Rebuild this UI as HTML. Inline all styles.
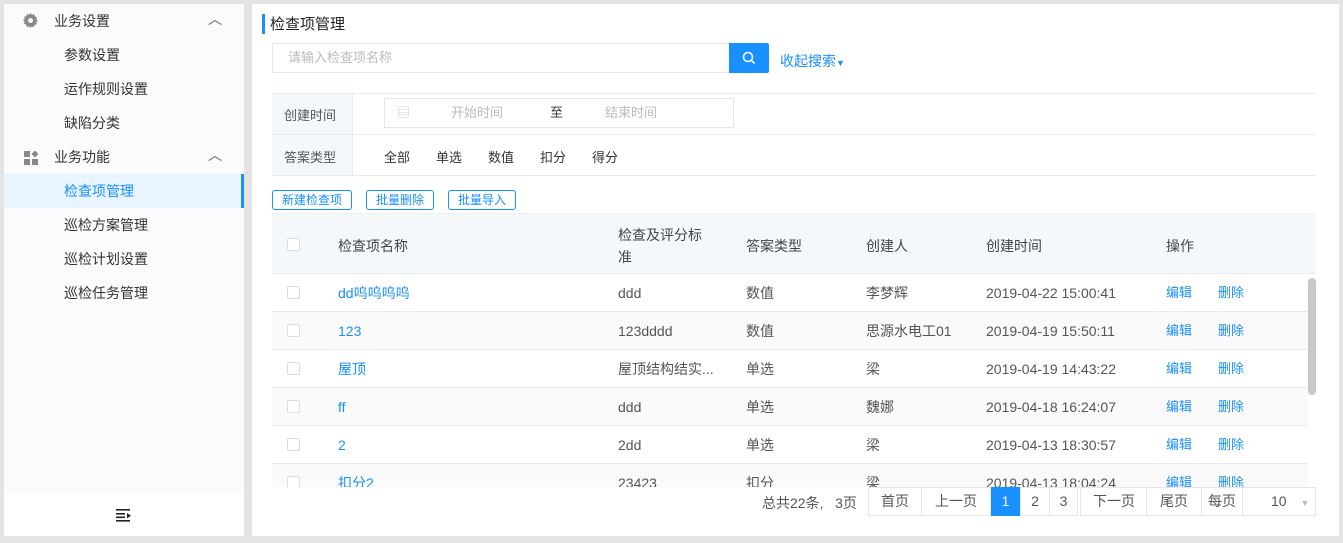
<!DOCTYPE html>
<html><head><meta charset="utf-8"><style>
*{box-sizing:border-box;margin:0;padding:0}
body{width:1343px;height:543px;background:#e4e4e4;font-family:"Liberation Sans","Noto Sans CJK SC",sans-serif;font-size:14px;color:#333;position:relative;overflow:hidden}
.abs{position:absolute}
.side{left:4px;top:4px;width:240px;height:532px;background:#fafbfd}
.side .foot{position:absolute;left:0;bottom:0;width:240px;height:42px;background:#fff}
.mi{position:absolute;left:0;width:240px;height:34px;line-height:34px}
.main{left:252px;top:4px;width:1087px;height:532px;background:#fff}
.cb{position:absolute;left:15px;width:13px;height:13px;border:1px solid #ddd;background:#fff;border-radius:2px}
.row{position:absolute;left:0;width:1036px;height:38px;border-bottom:1px solid #e8ecf0;line-height:38px}
.row span{position:absolute;white-space:nowrap}
.blue{color:#1890ff}
.btn{position:absolute;top:186px;height:20px;border:1px solid #1890ff;border-radius:3px;color:#1890ff;font-size:12px;line-height:18px;text-align:center}
.pg{position:absolute;top:483px;height:29px;border:1px solid #e6e6e6;line-height:27px;text-align:center;font-size:14px;color:#555;background:#fff}
</style></head><body>
<div class="abs side">
  <div class="mi" style="top:0;font-size:14px"><svg class="abs" style="left:19px;top:9px" width="15" height="15" viewBox="0 0 16 16"><path fill="#888" d="M8 0l1.6 1.8 2.4-.6.6 2.4 2.4.8-.8 2.4L16 8l-1.8 1.6.6 2.4-2.4.6-.8 2.4-2.4-.8L8 16l-1.6-1.8-2.4.6-.6-2.4-2.4-.8.8-2.4L0 8l1.8-1.6-.6-2.4 2.4-.6.8-2.4 2.4.8z"/><circle cx="8" cy="8" r="2.6" fill="#fafbfd"/></svg><span class="abs" style="left:50px">业务设置</span><span class="abs" style="left:204px;top:-2px;color:#666">︿</span></div>
  <div class="mi" style="top:34px"><span class="abs" style="left:60px">参数设置</span></div>
  <div class="mi" style="top:68px"><span class="abs" style="left:60px">运作规则设置</span></div>
  <div class="mi" style="top:102px"><span class="abs" style="left:60px">缺陷分类</span></div>
  <div class="mi" style="top:136px"><svg class="abs" style="left:20px;top:11px" width="14" height="14" viewBox="0 0 14 14"><rect x="0" y="0" width="6" height="6" fill="#888"/><rect x="0" y="8" width="6" height="6" fill="#888"/><rect x="8" y="8" width="6" height="6" fill="#888"/><rect x="8.5" y=".5" width="5" height="5" fill="#888" transform="rotate(45 11 3)"/></svg><span class="abs" style="left:50px">业务功能</span><span class="abs" style="left:204px;top:-2px;color:#666">︿</span></div>
  <div class="mi" style="top:170px;background:#e8f4ff;border-right:3px solid #1890ff"><span class="abs blue" style="left:60px">检查项管理</span></div>
  <div class="mi" style="top:204px"><span class="abs" style="left:60px">巡检方案管理</span></div>
  <div class="mi" style="top:238px"><span class="abs" style="left:60px">巡检计划设置</span></div>
  <div class="mi" style="top:272px"><span class="abs" style="left:60px">巡检任务管理</span></div>
  <div class="foot"><svg class="abs" style="left:112px;top:14px" width="16" height="14" viewBox="0 0 16 14"><rect x="0" y="1" width="14" height="1.6" fill="#222"/><rect x="0" y="5" width="9" height="1.6" fill="#222"/><rect x="0" y="8.5" width="9" height="1.6" fill="#222"/><rect x="0" y="12" width="14" height="1.6" fill="#222"/><path d="M11 5l4 2.7-4 2.7z" fill="#222"/></svg></div>
</div>
<div class="abs main">
  <div class="abs" style="left:10px;top:10px;width:3px;height:20px;background:#1890ff"></div>
  <div class="abs" style="left:18px;top:11px;font-size:15px;color:#222;line-height:20px">检查项管理</div>
  <div class="abs" style="left:20px;top:39px;width:458px;height:30px;border:1px solid #e6e6e6;border-right:none;color:#bbb;line-height:28px;padding-left:15px;font-size:13px">请输入检查项名称</div>
  <div class="abs" style="left:477px;top:39px;width:40px;height:30px;background:#1890ff;border-radius:0 2px 2px 0"><svg class="abs" style="left:13px;top:8px" width="14" height="14" viewBox="0 0 14 14"><circle cx="6" cy="6" r="4.5" stroke="#fff" stroke-width="1.6" fill="none"/><path d="M9.3 9.3L12.5 12.5" stroke="#fff" stroke-width="1.6"/></svg></div>
  <div class="abs blue" style="left:528px;top:47px;font-size:14px">收起搜索<span style="font-size:9px">▼</span></div>
  <div class="abs" style="left:20px;top:89px;width:1044px;height:83px;border-top:1px solid #e8ecf0;border-bottom:1px solid #e8ecf0"></div>
  <div class="abs" style="left:20px;top:130px;width:1044px;height:1px;background:#e8ecf0"></div>
  <div class="abs" style="left:20px;top:90px;width:81px;height:81px;background:#f5f8fb;border-right:1px solid #e8ecf0"></div>
  <div class="abs" style="left:20px;top:130px;width:81px;height:1px;background:#e8ecf0"></div>
  <div class="abs" style="left:32px;top:101px;font-size:13px;color:#555">创建时间</div>
  <div class="abs" style="left:32px;top:143px;font-size:13px;color:#555">答案类型</div>
  <div class="abs" style="left:132px;top:94px;width:350px;height:30px;border:1px solid #e6e6e6;font-size:13px;line-height:28px">
    <span class="abs" style="left:12px;color:#ccc">▤</span><span class="abs" style="left:66px;color:#bbb">开始时间</span><span class="abs" style="left:165px;color:#333">至</span><span class="abs" style="left:220px;color:#bbb">结束时间</span></div>
  <div class="abs" style="left:132px;top:143px;font-size:13px"><span class="abs" style="left:0;white-space:nowrap">全部</span><span class="abs" style="left:52px;white-space:nowrap">单选</span><span class="abs" style="left:104px;white-space:nowrap">数值</span><span class="abs" style="left:156px;white-space:nowrap">扣分</span><span class="abs" style="left:208px;white-space:nowrap">得分</span></div>
  <div class="btn" style="left:20px;width:80px">新建检查项</div>
  <div class="btn" style="left:114px;width:68px">批量删除</div>
  <div class="btn" style="left:196px;width:68px">批量导入</div>
  <div class="abs" style="left:20px;top:209px;width:1044px;height:274px;overflow:hidden">
    <div class="abs" style="left:0;top:0;width:1044px;height:61px;background:#f5f8fb;border-top:1px solid #eef1f4;border-bottom:1px solid #e8ecf0;color:#444;font-size:14px">
      <div class="cb" style="top:24px"></div>
      <span class="abs" style="left:66px;top:22px">检查项名称</span>
      <span class="abs" style="left:346px;top:10px;line-height:22px">检查及评分标<br>准</span>
      <span class="abs" style="left:474px;top:22px">答案类型</span>
      <span class="abs" style="left:594px;top:22px">创建人</span>
      <span class="abs" style="left:714px;top:22px">创建时间</span>
      <span class="abs" style="left:894px;top:22px">操作</span>
    </div>
    <div class="row" style="top:61px;background:#fff"><div class="cb" style="top:12px"></div><span class="blue" style="left:66px">dd呜呜呜呜</span><span style="left:346px;color:#555">ddd</span><span style="left:474px;color:#555">数值</span><span style="left:594px;color:#555">李梦辉</span><span style="left:714px;color:#555">2019-04-22 15:00:41</span><span class="blue" style="left:894px;font-size:13px">编辑</span><span class="blue" style="left:946px;font-size:13px">删除</span></div>
    <div class="row" style="top:99px;background:#fafafa"><div class="cb" style="top:12px"></div><span class="blue" style="left:66px">123</span><span style="left:346px;color:#555">123dddd</span><span style="left:474px;color:#555">数值</span><span style="left:594px;color:#555">思源水电工01</span><span style="left:714px;color:#555">2019-04-19 15:50:11</span><span class="blue" style="left:894px;font-size:13px">编辑</span><span class="blue" style="left:946px;font-size:13px">删除</span></div>
    <div class="row" style="top:137px;background:#fff"><div class="cb" style="top:12px"></div><span class="blue" style="left:66px">屋顶</span><span style="left:346px;color:#555">屋顶结构结实...</span><span style="left:474px;color:#555">单选</span><span style="left:594px;color:#555">梁</span><span style="left:714px;color:#555">2019-04-19 14:43:22</span><span class="blue" style="left:894px;font-size:13px">编辑</span><span class="blue" style="left:946px;font-size:13px">删除</span></div>
    <div class="row" style="top:175px;background:#fafafa"><div class="cb" style="top:12px"></div><span class="blue" style="left:66px">ff</span><span style="left:346px;color:#555">ddd</span><span style="left:474px;color:#555">单选</span><span style="left:594px;color:#555">魏娜</span><span style="left:714px;color:#555">2019-04-18 16:24:07</span><span class="blue" style="left:894px;font-size:13px">编辑</span><span class="blue" style="left:946px;font-size:13px">删除</span></div>
    <div class="row" style="top:213px;background:#fff"><div class="cb" style="top:12px"></div><span class="blue" style="left:66px">2</span><span style="left:346px;color:#555">2dd</span><span style="left:474px;color:#555">单选</span><span style="left:594px;color:#555">梁</span><span style="left:714px;color:#555">2019-04-13 18:30:57</span><span class="blue" style="left:894px;font-size:13px">编辑</span><span class="blue" style="left:946px;font-size:13px">删除</span></div>
    <div class="row" style="top:251px;background:#fafafa"><div class="cb" style="top:12px"></div><span class="blue" style="left:66px">扣分2</span><span style="left:346px;color:#555">23423</span><span style="left:474px;color:#555">扣分</span><span style="left:594px;color:#555">梁</span><span style="left:714px;color:#555">2019-04-13 18:04:24</span><span class="blue" style="left:894px;font-size:13px">编辑</span><span class="blue" style="left:946px;font-size:13px">删除</span></div>
    <div class="abs" style="left:1036px;top:61px;width:8px;height:213px;background:#fff"></div>
    <div class="abs" style="left:1036px;top:65px;width:8px;height:117px;background:#c8c8c8;border-radius:4px"></div>
  </div>
  <div class="abs" style="left:510px;top:489px;font-size:14px;color:#555">总共22条,&nbsp;&nbsp;&nbsp;3页</div>
  <div class="pg" style="left:616px;width:54px">首页</div>
  <div class="pg" style="left:669px;width:70px">上一页</div>
  <div class="pg" style="left:739px;width:29px;background:#1890ff;color:#fff;border-color:#1890ff">1</div>
  <div class="pg" style="left:768px;width:30px">2</div>
  <div class="pg" style="left:797px;width:29px">3</div>
  <div class="pg" style="left:828px;width:68px">下一页</div>
  <div class="pg" style="left:894px;width:56px">尾页</div>
  <div class="pg" style="left:949px;width:42px">每页</div>
  <div class="pg" style="left:990px;width:74px;text-align:left;padding-left:28px">10 <span style="color:#bbb;font-size:9px;margin-left:10px">▼</span></div>
</div>
</body></html>
